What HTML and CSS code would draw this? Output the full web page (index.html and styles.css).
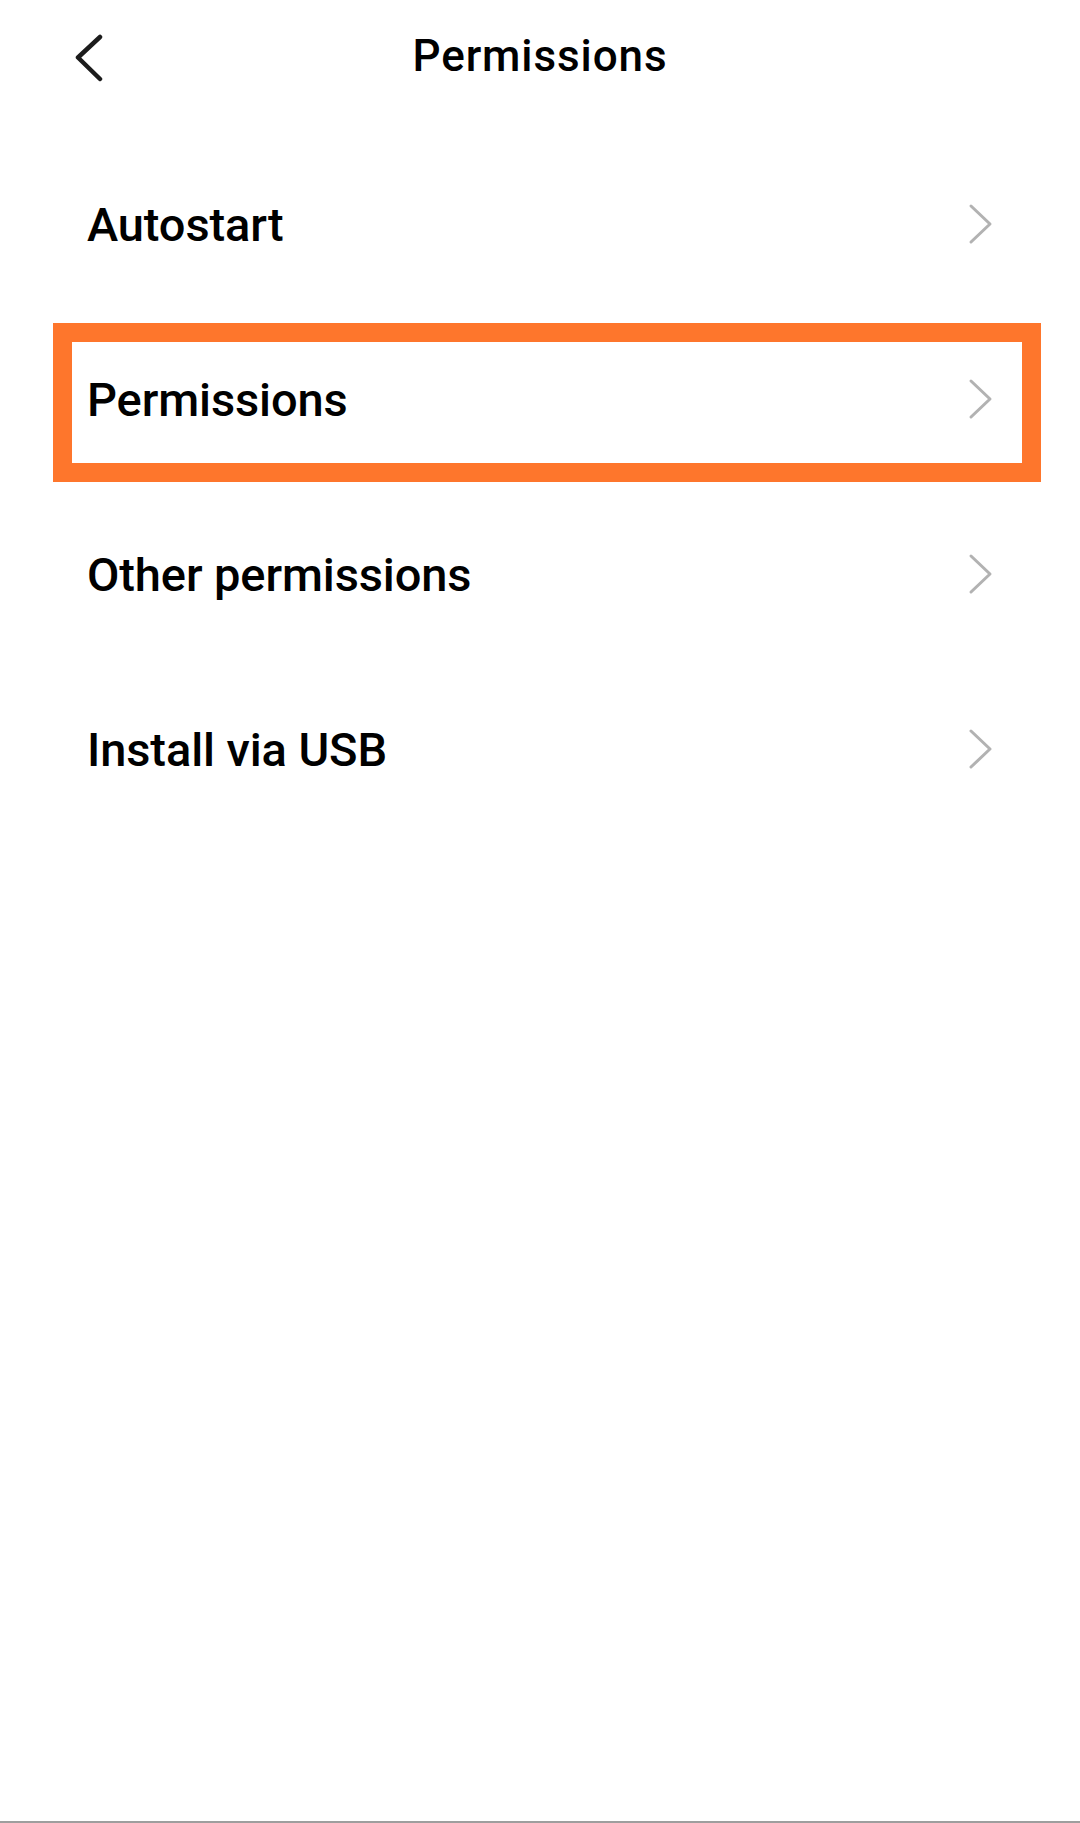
FILE: index.html
```html
<!DOCTYPE html>
<html lang="en">
<head>
<meta charset="utf-8">
<title>Permissions</title>
<link rel="stylesheet" href="styles.css">
</head>
<body>
<div class="screen">
  <header class="topbar">
    <button class="back" aria-label="Back">
      <svg width="40" height="56" viewBox="0 0 40 56"><path d="M26 3 L4 23.5 L26 45" fill="none" stroke="#1c1c1c" stroke-width="4.5" stroke-linecap="round" stroke-linejoin="round"/></svg>
    </button>
    <h1 class="title">Permissions</h1>
    <span class="spacer-col"></span>
  </header>
  <ul class="menu">
    <li class="item"><span class="label">Autostart</span><svg class="chev" width="30" height="44" viewBox="0 0 30 44"><path d="M5 4 L24 22 L5 40" fill="none" stroke="#b2b2b2" stroke-width="3" stroke-linecap="round" stroke-linejoin="round"/></svg></li>
    <li class="item highlighted"><span class="label">Permissions</span><svg class="chev" width="30" height="44" viewBox="0 0 30 44"><path d="M5 4 L24 22 L5 40" fill="none" stroke="#b2b2b2" stroke-width="3" stroke-linecap="round" stroke-linejoin="round"/></svg></li>
    <li class="item"><span class="label">Other permissions</span><svg class="chev" width="30" height="44" viewBox="0 0 30 44"><path d="M5 4 L24 22 L5 40" fill="none" stroke="#b2b2b2" stroke-width="3" stroke-linecap="round" stroke-linejoin="round"/></svg></li>
    <li class="item"><span class="label">Install via USB</span><svg class="chev" width="30" height="44" viewBox="0 0 30 44"><path d="M5 4 L24 22 L5 40" fill="none" stroke="#b2b2b2" stroke-width="3" stroke-linecap="round" stroke-linejoin="round"/></svg></li>
  </ul>
  <div class="fill"></div>
  <div class="bottom-line"></div>
</div>
</body>
</html>
```

FILE: styles.css
```css
* { box-sizing: border-box; }
html, body {
  margin: 0;
  padding: 0;
  background: #ffffff;
}
body {
  font-family: Roboto, "Noto Sans", "Liberation Sans", sans-serif;
  color: #000;
}
.screen {
  min-height: 1823px;
  display: flex;
  flex-direction: column;
}
.topbar {
  height: 116px;
  display: grid;
  grid-template-columns: 1fr auto 1fr;
  align-items: center;
}
.back {
  justify-self: start;
  margin-left: 74px;
  margin-top: 8px;
  padding: 0;
  border: 0;
  background: none;
  width: 40px;
  height: 56px;
  display: flex;
}
.title {
  margin: 0 0 4px 0;
  font-size: 44px;
  font-weight: 500;
  letter-spacing: 0.9px;
  line-height: 1;
}
.menu {
  list-style: none;
  margin: 0;
  padding: 21px 0 0 0;
}
.item {
  position: relative;
  height: 175px;
  display: flex;
  align-items: center;
  justify-content: space-between;
  padding: 0 84px 0 87px;
}
.label {
  font-size: 47px;
  font-weight: 500;
  line-height: 1;
  letter-spacing: -0.1px;
}
.chev {
  display: block;
  margin-top: -2px;
}
.highlighted::before {
  content: "";
  position: absolute;
  left: 53px;
  right: 39px;
  top: 11px;
  bottom: 5px;
  border: 19px solid #fe762c;
  pointer-events: none;
}
.fill { flex: 1; }
.bottom-line {
  height: 2px;
  background: #9e9e9e;
}
```
